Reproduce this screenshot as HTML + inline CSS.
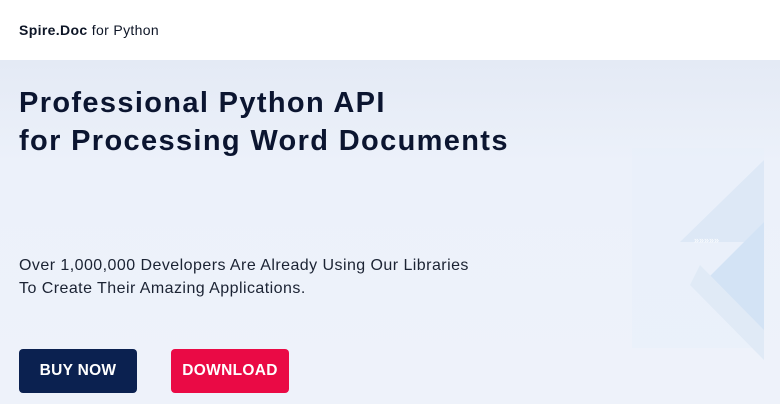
<!DOCTYPE html>
<html><head><style>
body{margin:0;width:780px;height:404px;overflow:hidden;font-family:"Liberation Sans",sans-serif;background:#ebf0f9;position:relative}
.hdr{position:absolute;top:0;left:0;width:780px;height:60px;background:#fff}
.logo{position:absolute;left:19px;top:22px;font-size:14px;color:#0d1526;letter-spacing:0.35px}
.main{position:absolute;top:60px;left:0;width:780px;height:344px;background:linear-gradient(180deg,#e4eaf5 0%,#ecf1fa 30%,#eef2fa 100%)}
h1{position:absolute;left:19px;top:84px;margin:0;font-size:29px;line-height:38px;font-weight:bold;color:#0b1530;letter-spacing:1.35px}
.sub{position:absolute;left:19px;top:254px;font-size:16px;line-height:23px;color:#1b2333;letter-spacing:0.45px}
.btn{position:absolute;top:349px;width:118px;height:44px;border-radius:4px;color:#fff;font-weight:bold;font-size:15.5px;text-align:center;line-height:44px;letter-spacing:0.3px}
</style></head><body>
<div class="hdr"><div class="logo"><b>Spire.Doc</b> for Python</div></div>
<div class="main">
<svg width="780" height="344" style="position:absolute;left:0;top:0">
<rect x="632" y="88" width="132" height="200" fill="#e8eff9" opacity="0.5"/>
<polygon points="764,100 680,182 764,182" fill="#dde8f6"/>
<polygon points="764,162 706,220 764,276" fill="#d3e3f5"/>
<polygon points="700,205 764,270 764,300 690,225" fill="#e0eaf6"/>
<text x="694" y="183" font-size="9" fill="#fff" font-family="Liberation Sans">»»»»»</text>
</svg>
</div>
<h1>Professional Python API<br>for Processing Word Documents</h1>
<div class="sub">Over 1,000,000 Developers Are Already Using Our Libraries<br>To Create Their Amazing Applications.</div>
<div class="btn" style="left:19px;background:#0b2150">BUY NOW</div>
<div class="btn" style="left:171px;background:#ea0a45">DOWNLOAD</div>
</body></html>
